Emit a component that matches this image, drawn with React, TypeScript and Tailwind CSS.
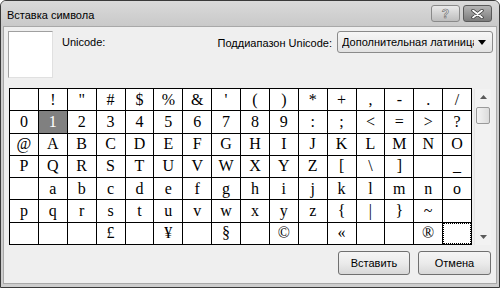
import React from "react";

const rows: string[][] = [
  ["", "!", '"', "#", "$", "%", "&", "'", "(", ")", "*", "+", ",", "-", ".", "/"],
  ["0", "1", "2", "3", "4", "5", "6", "7", "8", "9", ":", ";", "<", "=", ">", "?"],
  ["@", "A", "B", "C", "D", "E", "F", "G", "H", "I", "J", "K", "L", "M", "N", "O"],
  ["P", "Q", "R", "S", "T", "U", "V", "W", "X", "Y", "Z", "[", "\\", "]", "", "_"],
  ["", "a", "b", "c", "d", "e", "f", "g", "h", "i", "j", "k", "l", "m", "n", "o"],
  ["p", "q", "r", "s", "t", "u", "v", "w", "x", "y", "z", "{", "|", "}", "~", ""],
  ["", "", "", "£", "", "¥", "", "§", "", "©", "", "«", "", "", "®", ""],
];

const ui = { fontFamily: '"Liberation Sans", Arial, sans-serif' };
const serif = { fontFamily: '"Liberation Serif", "Times New Roman", serif' };

export default function App() {
  const cells = rows.flat();
  return (
    <div
      className="w-[500px] h-[288px] flex flex-col bg-[#cdcdcd] border border-[#3a3a3a] rounded-t-[6px] px-[2px] pb-[3px] text-[11px] text-black overflow-hidden"
      style={ui}
    >
      {/* Title bar */}
      <div className="h-[25px] flex items-start justify-between bg-gradient-to-b from-[#dadada] to-[#c9c9c9] -mx-[2px] px-[6px]">
        <span className="mt-[8px] text-[11px] leading-[13px] text-black">Вставка символа</span>
        <div className="flex gap-[3px] mt-[4px] mr-[1px]">
          <div className="w-[29px] h-[17px] rounded-[3px] border border-[#8a8a8a] bg-gradient-to-b from-[#eaeaea] to-[#bdbdbd] flex items-center justify-center">
            <span className="text-[12px] leading-none font-bold text-[#eeeeee]" style={{ ...ui, WebkitTextStroke: "0.6px #6a6a6a" }}>?</span>
          </div>
          <div className="w-[29px] h-[17px] rounded-[3px] border border-[#5a5a5a] bg-gradient-to-b from-[#b5b5b5] to-[#7c7c7c] flex items-center justify-center">
            <svg width="13" height="10" viewBox="0 0 13 10">
              <path d="M2 1.5 L11 8.5 M11 1.5 L2 8.5" stroke="#3a3a3a" strokeWidth="3.4" strokeLinecap="round" />
              <path d="M2 1.5 L11 8.5 M11 1.5 L2 8.5" stroke="#ffffff" strokeWidth="1.8" strokeLinecap="round" />
            </svg>
          </div>
        </div>
      </div>

      {/* Body */}
      <div className="flex-1 flex flex-col bg-[#efefef] border border-[#a8a8a8] pt-[4px]">
        {/* Top row */}
        <div className="flex h-[47px]">
          <div className="ml-[4px] w-[45px] h-[47px] bg-white border border-t-[#a0a0a0] border-l-[#a0a0a0] border-r-[#e0e0e0] border-b-[#e0e0e0]" />
          <div className="ml-[9px] mt-[5px] leading-[13px]">Unicode:</div>
          <div className="ml-auto mr-[3px] flex items-start">
            <span className="mt-[6px] leading-[13px] mr-[5px]">Поддиапазон Unicode:</span>
            <div className="w-[156px] h-[22px] rounded-[3px] border border-[#8a8a8a] bg-gradient-to-b from-[#f7f7f7] to-[#e2e2e2] flex items-center pl-[4px] pr-[6px] overflow-hidden">
              <span className="flex-1 whitespace-nowrap overflow-hidden text-[11px] leading-[13px]">Дополнительная латиница</span>
              <svg width="8" height="5" viewBox="0 0 8 5" className="ml-[4px] shrink-0">
                <path d="M0 0 L8 0 L4 5 Z" fill="#000" />
              </svg>
            </div>
          </div>
        </div>

        {/* Grid + scrollbar */}
        <div className="flex mt-[10px] ml-[5px]">
          <div
            className="w-[463px] h-[157px] bg-black p-px gap-px grid grid-cols-[repeat(16,minmax(0,1fr))] grid-rows-[repeat(7,minmax(0,1fr))]"
            style={serif}
          >
            {cells.map((c, i) => {
              const selected = i === 17;
              const focused = i === cells.length - 1;
              return (
                <div
                  key={i}
                  className={
                    selected
                      ? "bg-[#808080] text-white flex items-center justify-center text-[16px] leading-none"
                      : focused
                      ? "bg-white border border-dotted border-black flex items-center justify-center text-[16px] leading-none"
                      : "bg-white text-black flex items-center justify-center text-[16px] leading-none"
                  }
                >
                  {c}
                </div>
              );
            })}
          </div>
          {/* Scrollbar */}
          <div className="ml-[2px] mt-px w-[17px] h-[156px] bg-[#f2f2f2] border-l border-[#e6e6e6] flex flex-col items-center">
            <div className="h-[16px] w-full flex items-center justify-center">
              <svg width="7" height="4" viewBox="0 0 7 4">
                <path d="M0 4 L7 4 L3.5 0 Z" fill="#5a5a5a" />
              </svg>
            </div>
            <div className="w-[14px] h-[17px] mt-[2px] rounded-[2px] border border-[#9a9a9a] bg-gradient-to-r from-[#f4f4f4] to-[#dcdcdc]" />
            <div className="flex-1" />
            <div className="h-[16px] w-full flex items-center justify-center">
              <svg width="7" height="4" viewBox="0 0 7 4">
                <path d="M0 0 L7 0 L3.5 4 Z" fill="#5a5a5a" />
              </svg>
            </div>
          </div>
        </div>

        {/* Buttons */}
        <div className="flex justify-end gap-[8px] mt-[6px] mr-[5px]">
          <button className="w-[72px] h-[24px] rounded-[3px] border border-[#707070] bg-gradient-to-b from-[#f5f5f5] via-[#ebebeb] to-[#d8d8d8] text-[11px] text-black" style={ui}>
            Вставить
          </button>
          <button className="w-[73px] h-[24px] rounded-[3px] border border-[#707070] bg-gradient-to-b from-[#f5f5f5] via-[#ebebeb] to-[#d8d8d8] text-[11px] text-black" style={ui}>
            Отмена
          </button>
        </div>
      </div>
    </div>
  );
}
